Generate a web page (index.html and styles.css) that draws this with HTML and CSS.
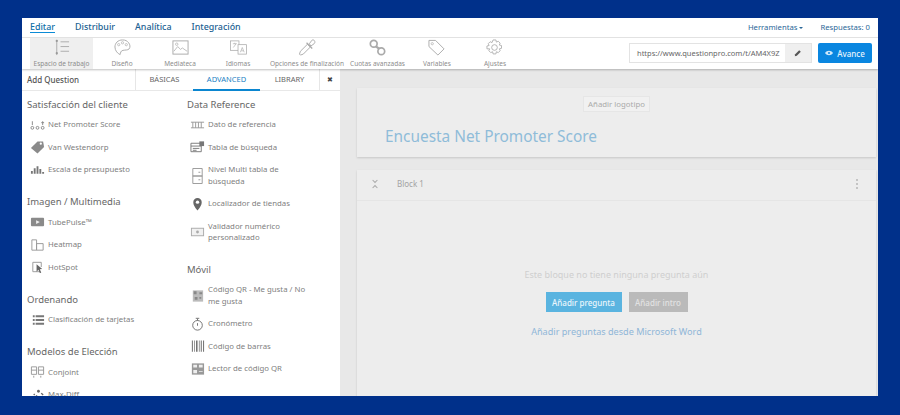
FILE: index.html
```html
<!DOCTYPE html>
<html lang="es">
<head>
<meta charset="utf-8">
<title>Encuesta Net Promoter Score</title>
<link rel="stylesheet" href="styles.css">
</head>
<body>
<div class="frame">
  <header class="nav">
    <div class="nav-left">
      <a class="nav-link active">Editar</a><a class="nav-link">Distribuir</a><a class="nav-link">Analítica</a><a class="nav-link">Integración</a>
    </div>
    <div class="nav-right">
      <span>Herramientas <i class="caret"></i></span><span>Respuestas: 0</span>
    </div>
  </header>
  <div class="toolbar">
    <div class="tools">
      <div class="tool selected">
        <svg class="tool-icon" viewBox="0 0 20 18"><path d="M5 1v16M9 3h9M9 8h9M9 13h9" fill="none" stroke="#aaa" stroke-width="1"/><circle cx="5" cy="2" r="1.200" fill="#999"/><circle cx="5" cy="15" r="1.200" fill="#999"/></svg>
        <span>Espacio de trabajo</span>
      </div>
      <div class="tool">
        <svg class="tool-icon" viewBox="0 0 20 18"><path d="M10 1C5 1 2 4.500 2 8.500c0 4 3 7 5.500 8 .5-2 .5-4 3-4.500 2.500-.5 5 0 6.500-1.500 1.500-2 1-4.500-.5-6.500C15 2 13 1 10 1z" fill="none" stroke="#aaa"/><circle cx="6" cy="6" r="1.200" fill="none" stroke="#aaa" stroke-width=".7"/><circle cx="10" cy="4" r="1.200" fill="none" stroke="#aaa" stroke-width=".7"/><circle cx="14" cy="6" r="1.200" fill="none" stroke="#aaa" stroke-width=".7"/></svg>
        <span>Diseño</span>
      </div>
      <div class="tool">
        <svg class="tool-icon" viewBox="0 0 20 18"><rect x="2" y="2" width="16" height="14" fill="none" stroke="#aaa"/><path d="M3 13l4-5 3 3 2-1.500 5 3.500" fill="none" stroke="#aaa" stroke-width=".8"/><circle cx="6" cy="5.500" r="1.300" fill="none" stroke="#aaa" stroke-width=".7"/></svg>
        <span>Mediateca</span>
      </div>
      <div class="tool">
        <svg class="tool-icon" viewBox="0 0 20 18"><rect x="1.500" y="2" width="9" height="10" fill="none" stroke="#aaa" stroke-width=".8"/><rect x="9.500" y="6" width="9" height="10" fill="#fff" stroke="#aaa" stroke-width=".8"/><path d="M4 5h4M6 4v1M4.500 9l3-4M12 14l2-5 2 5M13 12.500h2" fill="none" stroke="#aaa" stroke-width=".7"/></svg>
        <span>Idiomas</span>
      </div>
      <div class="tool">
        <svg class="tool-icon" viewBox="0 0 20 18"><path d="M2.500 17l-1-1 1-3 7.500-7.500 3 3L5.500 16z" fill="none" stroke="#aaa"/><path d="M9 4l6 6" fill="none" stroke="#aaa" stroke-width="1.300"/><path d="M12 5l2.500-3.500c1-1 2.500-.5 3 .5s.5 2-.5 3L13.500 7.500z" fill="none" stroke="#aaa"/></svg>
        <span>Opciones de finalización</span>
      </div>
      <div class="tool">
        <svg class="tool-icon" viewBox="0 0 20 18"><circle cx="6" cy="5" r="3.600" fill="none" stroke="#aaa" stroke-width="1.800"/><circle cx="14" cy="13" r="3.600" fill="none" stroke="#aaa" stroke-width="1.800"/><path d="M8 7.500l4 3" stroke="#aaa" stroke-width="2.500"/></svg>
        <span>Cuotas avanzadas</span>
      </div>
      <div class="tool">
        <svg class="tool-icon" viewBox="0 0 20 18"><path d="M2 1.500h7l9 9-6.500 6.500-9.500-9z" fill="none" stroke="#aaa"/><circle cx="5.500" cy="5" r="1.200" fill="none" stroke="#aaa" stroke-width=".7"/></svg>
        <span>Variables</span>
      </div>
      <div class="tool">
        <svg class="tool-icon" viewBox="0 0 20 18"><path d="M8.500 1h3l.5 2.300 2-.9 2 2-.9 2 2.300.5v3l-2.300.5.9 2-2 2-2-.9-.5 2.300h-3l-.5-2.300-2 .9-2-2 .9-2L2 10.400V7.400l2.300-.5-.9-2 2-2 2 .9z" fill="none" stroke="#aaa" stroke-width=".9"/><circle cx="10" cy="9" r="3" fill="none" stroke="#aaa" stroke-width=".9"/></svg>
        <span>Ajustes</span>
      </div>
    </div>
    <div class="actions">
      <div class="url">
        <span class="url-text">https://www.questionpro.com/t/AM4X9Z</span>
        <span class="url-edit"><svg viewBox="0 0 10 10" width="8" height="8"><path d="M1 9l.5-2.500L6.500 1.500 8.500 3.500 3.500 8.500z" fill="#555"/></svg></span>
      </div>
      <button class="preview"><svg viewBox="0 0 12 8" width="8" height="6"><path d="M0 4c3-4.500 9-4.500 12 0-3 4.500-9 4.500-12 0z" fill="#cfe8fa"/><circle cx="6" cy="4" r="1.500" fill="#0a86e0"/></svg>Avance</button>
    </div>
  </div>
  <div class="body">
    <aside class="sidebar">
      <div class="tabs">
        <div class="tabs-title">Add Question</div>
        <div class="tab basic">BÁSICAS</div>
        <div class="tab advanced">ADVANCED</div>
        <div class="tab library">LIBRARY</div>
        <div class="tab close">✖</div>
      </div>
      <div class="columns">
        <div class="col col-a">
          <section class="group">
            <h3>Satisfacción del cliente</h3>
            <div class="item"><svg class="ico" viewBox="0 0 16 12"><circle cx="2.500" cy="9" r="1.500" fill="none" stroke="#888"/><circle cx="8" cy="9" r="1.500" fill="none" stroke="#888"/><circle cx="13.500" cy="9" r="1.500" fill="none" stroke="#888"/><path d="M2.500 2v4M13.500 2v4M12 3.500h3" stroke="#888"/></svg>Net Promoter Score</div>
            <div class="item"><svg class="ico" viewBox="0 0 16 14"><path d="M1 8l7-7 6 0 1 6-7 7z" fill="#8a8a8a"/><circle cx="11.500" cy="3.500" r="1.200" fill="#fff"/></svg>Van Westendorp</div>
            <div class="item"><svg class="ico" viewBox="0 0 16 12"><path d="M1 10V7h2v3zM4 10V4h2v6zM7 10V2h2v8zM10 10V5h2v5zM13 10V8h2v2z" fill="#777"/></svg>Escala de presupuesto</div>
          </section>
          <section class="group">
            <h3>Imagen / Multimedia</h3>
            <div class="item"><svg class="ico" viewBox="0 0 16 12"><rect x="1" y="1.500" width="14" height="9" rx="1" fill="#8a8a8a"/><path d="M6.500 4l4 2-4 2z" fill="#eee"/></svg>TubePulse™</div>
            <div class="item"><svg class="ico" viewBox="0 0 16 14"><path d="M2 1.500h5v11H2zM7 5.500h7v7H7z" fill="none" stroke="#999"/></svg>Heatmap</div>
            <div class="item"><svg class="ico" viewBox="0 0 16 14"><path d="M11 12H3V2h9v5" fill="none" stroke="#999"/><path d="M7 4l6 5-2.500.5L12 13l-1.500.5-1.500-3.500-2 2z" fill="#666"/></svg>HotSpot</div>
          </section>
          <section class="group">
            <h3>Ordenando</h3>
            <div class="item"><svg class="ico" viewBox="0 0 16 14"><path d="M6 2h9v2H6zM6 6h9v2H6zM6 10h9v2H6zM3 2h2v2H3zM3 6h2v2H3zM3 10h2v2H3z" fill="#777"/></svg>Clasificación de tarjetas</div>
          </section>
          <section class="group">
            <h3>Modelos de Elección</h3>
            <div class="item"><svg class="ico" viewBox="0 0 16 14"><path d="M1.500 1.500h5.500v8H1.500zM9 1.500h5.500v8H9zM1.500 5h5.500M9 5h5.500M4 11v2M11.500 11v2" fill="none" stroke="#999"/></svg>Conjoint</div>
            <div class="item"><svg class="ico" viewBox="0 0 16 14"><circle cx="9" cy="3" r="1.500" fill="#666"/><path d="M2 13l5-5 5 5M12 5l2 2M4 6l1 1" fill="none" stroke="#666" stroke-width="1.500"/></svg>Max-Diff</div>
          </section>
        </div>
        <div class="col col-b">
          <section class="group">
            <h3>Data Reference</h3>
            <div class="item"><svg class="ico" viewBox="0 0 16 12"><path d="M1 3h14M1 9h14M3 3v6M6 3v6M9 3v6M12 3v6" fill="none" stroke="#999"/></svg>Dato de referencia</div>
            <div class="item"><svg class="ico" viewBox="0 0 16 14"><path d="M1 3h11v9H1zM1 6h11M3 8.500h7M3 10.500h4" fill="none" stroke="#777"/><rect x="10" y="1" width="5" height="5" fill="#777"/></svg>Tabla de búsqueda</div>
            <div class="item double"><svg class="ico tall" viewBox="0 0 16 20"><path d="M3 2h10v8H3zM3 10h10v8H3zM9 6h2M9 14h2" fill="none" stroke="#999"/></svg>Nivel Multi tabla de<br>búsqueda</div>
            <div class="item"><svg class="ico" viewBox="0 0 16 14"><path d="M8 14C5 10 3.500 8 3.500 5a4.500 4.500 0 0 1 9 0c0 3-1.500 5-4.500 9z" fill="#666"/><circle cx="8" cy="5" r="1.800" fill="#fff"/></svg>Localizador de tiendas</div>
            <div class="item double"><svg class="ico" viewBox="0 0 16 14"><rect x="1.500" y="3" width="13" height="8" fill="#f1f1f1" stroke="#aaa"/><circle cx="8" cy="7" r="1.500" fill="#aaa"/></svg>Validador numérico<br>personalizado</div>
          </section>
          <section class="group">
            <h3>Móvil</h3>
            <div class="item double"><svg class="ico" viewBox="0 0 16 14"><rect x="3" y="1" width="11" height="12" fill="#bbb"/><path d="M4 2h3v3H4zM10 3h3v2h-3zM5 8h3v3H5zM10 8h2v2h-2z" fill="#888"/></svg>Código QR - Me gusta / No<br>me gusta</div>
            <div class="item"><svg class="ico" viewBox="0 0 16 16"><circle cx="8" cy="9.500" r="5.500" fill="none" stroke="#666"/><path d="M6 1.500h4M8 2v2M8 7v3" fill="none" stroke="#666"/></svg>Cronómetro</div>
            <div class="item"><svg class="ico" viewBox="0 0 16 14"><path d="M2 1h1v12H2zM4.500 1h.7v12h-.7zM6.500 1h1.500v12H6.500zM9.500 1h.7v12h-.7zM11.500 1h1v12h-1zM14 1h1v12h-1z" fill="#666"/></svg>Código de barras</div>
            <div class="item"><svg class="ico" viewBox="0 0 16 14"><rect x="2" y="1" width="13" height="12" fill="#999"/><path d="M3.500 2.500h4v3h-4zM9.500 2.500h4v3h-4zM3.500 8h4v3.500h-4zM9.500 9h4v1h-4z" fill="#eee"/></svg>Lector de código QR</div>
          </section>
        </div>
      </div>
    </aside>
    <main class="canvas">
      <section class="card head-card">
        <div class="logo-btn">Añadir logotipo</div>
        <h1>Encuesta Net Promoter Score</h1>
      </section>
      <section class="card block">
        <div class="block-head">
          <span class="block-toggle"><svg viewBox="0 0 10 12" width="8" height="10"><path d="M2 1l3 3 3-3M2 11l3-3 3 3" fill="none" stroke="#aaa" stroke-width="1.300"/></svg></span>
          <span class="block-title">Block 1</span>
          <span class="dots"><i></i><i></i><i></i></span>
        </div>
        <div class="block-body">
          <p class="empty">Este bloque no tiene ninguna pregunta aún</p>
          <div class="btns"><button class="btn primary">Añadir pregunta</button><button class="btn muted">Añadir intro</button></div>
          <a class="word">Añadir preguntas desde Microsoft Word</a>
        </div>
      </section>
    </main>
  </div>
</div>
</body>
</html>
```
FILE: styles.css
```css
* { box-sizing: border-box; }
html, body { margin: 0; height: 100%; }
body {
  background: #00308a;
  padding: 18px 22px 19px;
  font-family: "Noto Sans", "Open Sans", sans-serif;
  overflow: hidden;
}
.frame {
  width: 856px;
  height: 378px;
  background: #fff;
  overflow: hidden;
  display: flex;
  flex-direction: column;
}
.nav {
  height: 20px;
  flex: none;
  display: flex;
  justify-content: space-between;
  align-items: flex-start;
  border-bottom: 1px solid #e6e6e6;
  padding: 0 8px;
}
.nav-left { display: flex; gap: 20px; }
.nav-link {
  font-size: 8.900px;
  font-weight: 500;
  line-height: 16px;
  height: 14.500px;
  padding-top: 1px;
  color: #1c5f92;
}
.nav-link.active { border-bottom: 1px solid #0b8bd6; color: #0f6fa8; }
.nav-right { display: flex; gap: 17px; font-size: 7.700px; line-height: 18px; color: #2a6798; }
.caret {
  display: inline-block;
  border: 2.500px solid transparent;
  border-top-color: #2a6798;
  border-bottom: 0;
  vertical-align: 1.500px;
}
.toolbar {
  height: 31px;
  flex: none;
  display: flex;
  justify-content: space-between;
  padding: 0 6px 0 8px;
  box-shadow: 0 1px 2px rgba(0, 0, 0, .25);
  position: relative;
  z-index: 2;
}
.tools { display: flex; }
.tool {
  min-width: 58px;
  padding: 1px 3px 0;
  display: flex;
  flex-direction: column;
  align-items: center;
  font-size: 6.500px;
  line-height: 9px;
  color: #8d8d8d;
  white-space: nowrap;
}
.tool.selected { background: #efefef; min-width: 63px; }
.tool-icon { width: 19px; height: 17px; margin-bottom: 2.500px; }
.actions { display: flex; gap: 6px; padding-top: 5px; }
.url {
  width: 183px;
  height: 20px;
  border: 1px solid #e3e3e3;
  display: flex;
  font-size: 7.500px;
  line-height: 18px;
  color: #666;
}
.url-text { flex: 1; padding-left: 7px; white-space: nowrap; overflow: hidden; }
.url-edit {
  width: 26px;
  background: #efefef;
  display: flex;
  align-items: center;
  justify-content: center;
}
.preview {
  width: 54px;
  height: 20px;
  border: 0;
  border-radius: 2px;
  background: #0a86e0;
  color: #e4f3fd;
  font: 500 8px "Noto Sans", sans-serif;
  display: flex;
  align-items: center;
  justify-content: center;
  gap: 4px;
  padding: 0;
}
.body { flex: 1; display: flex; min-height: 0; }
.sidebar { width: 318px; flex: none; background: #fff; overflow: hidden; }
.tabs {
  height: 22px;
  display: flex;
  border-bottom: 1px solid #e8e8e8;
  font-size: 7.500px;
  line-height: 21px;
  color: #666;
}
.tabs-title { width: 113px; padding-left: 5px; font-size: 8px; font-weight: 500; color: #555; }
.tab { text-align: center; border-left: 1px solid #e6e6e6; }
.basic { width: 58px; }
.advanced {
  width: 67px;
  color: #1a7fc4;
  border-bottom: 2px solid #0b86d0;
  height: 22px;
  border-left: 0;
}
.library { width: 59px; border-left: 0; }
.close { width: 21px; font-size: 7px; color: #444; }
.columns { display: flex; padding: 5.500px 0 0 5px; }
.col-a { width: 160px; flex: none; }
.col-b { width: 150px; flex: none; }
.group + .group { margin-top: 13px; }
.col-b .group + .group { margin-top: 12.500px; }
h3 {
  margin: 0 0 1px;
  font-size: 9.500px;
  font-weight: 400;
  line-height: 16px;
  color: #666;
}
.item {
  height: 22.500px;
  display: flex;
  align-items: center;
  font-size: 7.800px;
  line-height: 11.500px;
  color: #808080;
  position: relative;
  padding-left: 21px;
  white-space: nowrap;
}
.item.double { height: 34px; }
.ico {
  position: absolute;
  left: 3px;
  top: 50%;
  width: 15px;
  height: 14px;
  transform: translateY(-50%);
}
.ico.tall { height: 22px; }
.canvas {
  flex: 1;
  background: #e8e8e8;
  padding: 19px 2px 0 17px;
  min-width: 0;
  overflow: hidden;
}
.card { background: #ededed; box-shadow: 0 1px 2px rgba(0, 0, 0, .15); }
.head-card { height: 69px; padding-top: 8px; }
.logo-btn {
  width: 67px;
  height: 16px;
  margin: 0 auto;
  background: #f1f1f1;
  border: 1px solid #e6e6e6;
  text-align: center;
  font-size: 7.800px;
  line-height: 14px;
  color: #aaa;
  white-space: nowrap;
}
h1 {
  margin: 15px 0 0 28px;
  font-size: 15.400px;
  font-weight: 400;
  line-height: 20px;
  color: #8fbcd9;
}
.block { margin-top: 13px; height: 240px; }
.block-head {
  height: 31px;
  display: flex;
  align-items: center;
  border-bottom: 1px solid #e5e5e5;
  padding: 0 18px 3px 14px;
  font-size: 8px;
  color: #a3a3a3;
}
.block-toggle { width: 26px; display: flex; }
.block-title { flex: 1; }
.dots { display: flex; flex-direction: column; gap: 2px; }
.dots i { width: 2px; height: 2px; background: #c4c4c4; }
.block-body {
  display: flex;
  flex-direction: column;
  align-items: center;
  padding-top: 68px;
}
.empty { margin: 0; font-size: 9px; line-height: 12px; color: #cfcfcf; }
.btns { display: flex; gap: 7px; margin-top: 11px; }
.btn {
  height: 20px;
  border: 0;
  padding: 0;
  font: 500 8px "Noto Sans", sans-serif;
  color: #eaf6fc;
}
.primary { width: 76px; background: #5ab4e0; }
.muted { width: 59px; background: #bababa; color: #e2e2e2; }
.word { margin-top: 14px; font-size: 9.100px; line-height: 12px; color: #8fb6d8; }
```
